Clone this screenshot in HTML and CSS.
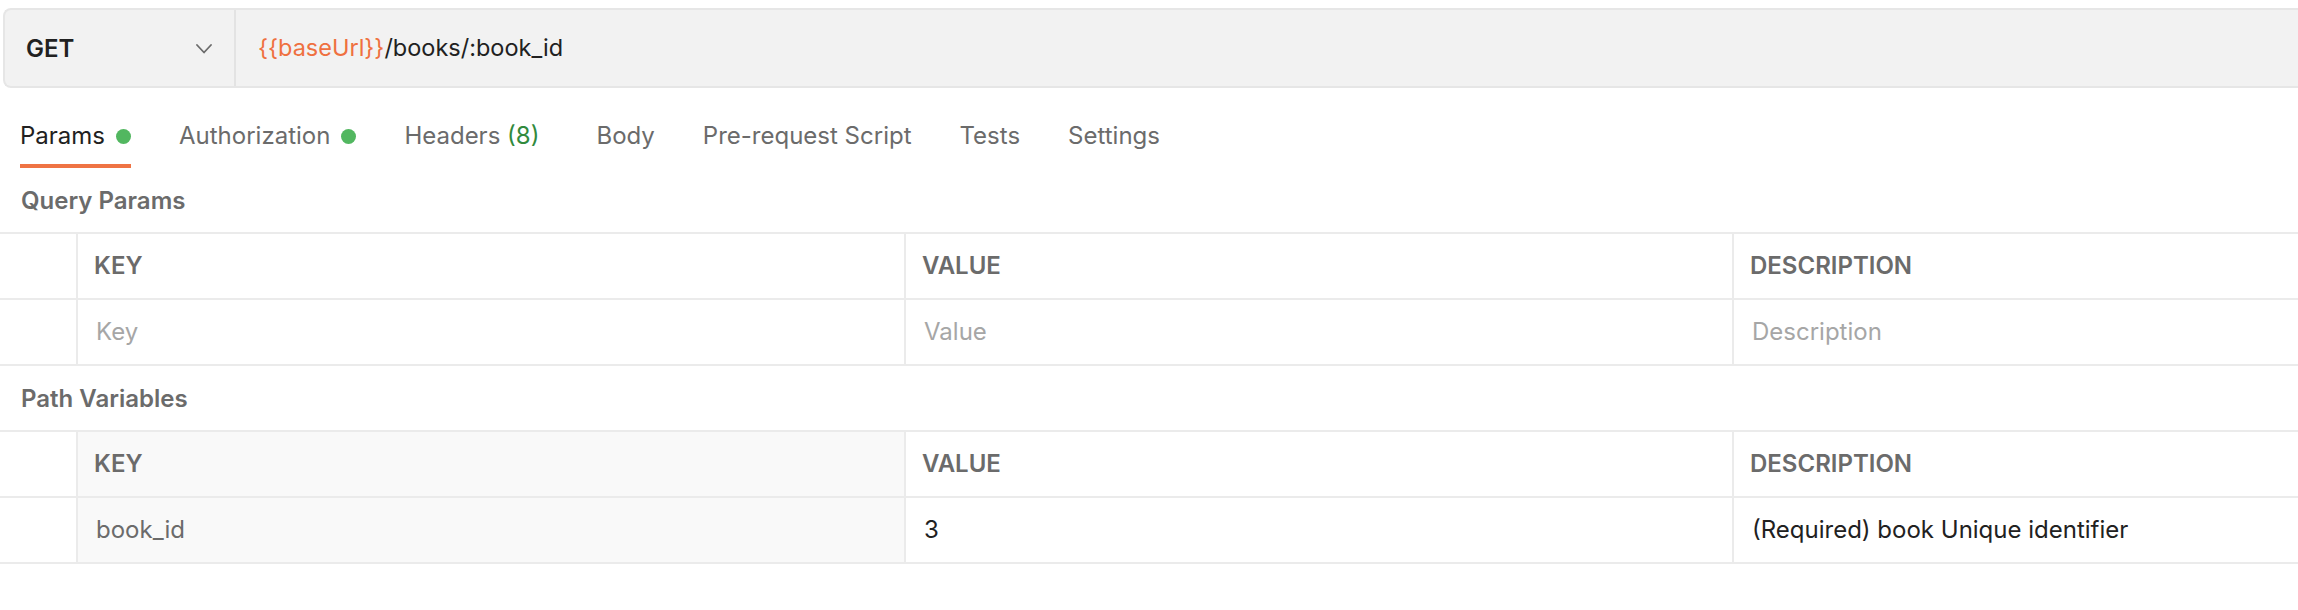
FILE: index.html
```html
<!DOCTYPE html>
<html lang="en">
<head>
<meta charset="utf-8">
<title>Request</title>
<link rel="stylesheet" href="styles.css">
</head>
<body>
<div class="page">
  <div class="url-bar">
    <div class="method">
      <span class="method-name">GET</span>
      <svg class="chevron" width="16" height="10" viewBox="0 0 16 10"><path d="M1 1 L8 8.5 L15 1" fill="none" stroke="#6b6b6b" stroke-width="1.8" stroke-linecap="round" stroke-linejoin="round"/></svg>
    </div>
    <div class="url"><span class="var">{{baseUrl}}</span>/books/:book_id</div>
  </div>

  <nav class="tabs">
    <div class="tab active">Params<span class="dot"></span></div>
    <div class="tab">Authorization<span class="dot"></span></div>
    <div class="tab tab-headers">Headers <span class="count">(8)</span></div>
    <div class="tab">Body</div>
    <div class="tab">Pre-request Script</div>
    <div class="tab">Tests</div>
    <div class="tab">Settings</div>
  </nav>

  <div class="section-title">Query Params</div>
  <div class="table">
    <div class="row head">
      <div class="cell handle"></div>
      <div class="cell">KEY</div>
      <div class="cell">VALUE</div>
      <div class="cell">DESCRIPTION</div>
    </div>
    <div class="row">
      <div class="cell handle"></div>
      <div class="cell input placeholder">Key</div>
      <div class="cell input placeholder">Value</div>
      <div class="cell input placeholder">Description</div>
    </div>
  </div>

  <div class="section-title">Path Variables</div>
  <div class="table">
    <div class="row head">
      <div class="cell handle"></div>
      <div class="cell shaded">KEY</div>
      <div class="cell">VALUE</div>
      <div class="cell">DESCRIPTION</div>
    </div>
    <div class="row">
      <div class="cell handle"></div>
      <div class="cell input shaded muted">book_id</div>
      <div class="cell input">3</div>
      <div class="cell input">(Required) book Unique identifier</div>
    </div>
  </div>
</div>
</body>
</html>
```
FILE: styles.css
```css
html, body {
  margin: 0;
  padding: 0;
  background: #ffffff;
}

body {
  font-family: Inter, "Noto Sans", "Liberation Sans", sans-serif;
  font-size: 24px;
  color: #212121;
  overflow: hidden;
}

.page {
  padding-top: 8px;
}

/* URL bar */
.url-bar {
  display: flex;
  height: 80px;
  box-sizing: border-box;
  margin-left: 3px;
  border: 2px solid #e6e6e6;
  border-right: 0;
  border-radius: 8px 0 0 8px;
  background: #f2f2f2;
}

.method {
  width: 231px;
  box-sizing: border-box;
  flex: none;
  display: flex;
  align-items: center;
  justify-content: space-between;
  padding: 0 22px 0 21px;
  border-right: 2px solid #e3e3e3;
}

.method-name {
  font-weight: 600;
  color: #212121;
  line-height: 32px;
  padding-top: 2px;
}

.chevron {
  display: block;
  margin-top: 1px;
}

.url {
  display: flex;
  align-items: center;
  padding-left: 22px;
  font-size: 23.5px;
  line-height: 32px;
  color: #212121;
}

.var {
  color: #ef7040;
}

/* Tabs */
.tabs {
  display: flex;
  gap: 48px;
  margin-top: 32px;
  padding-left: 20px;
}

.tab {
  display: flex;
  align-items: center;
  line-height: 32px;
  padding-bottom: 12px;
  border-bottom: 4px solid transparent;
  color: #6b6b6b;
}

.tab.active {
  color: #212121;
  border-bottom-color: #ef7344;
}

.tab-headers {
  margin-right: 9px;
  white-space: pre;
}

.dot {
  width: 15px;
  height: 15px;
  border-radius: 50%;
  background: #52b760;
  margin-left: 11px;
}

.count {
  color: #318a3d;
}

/* Section titles */
.section-title {
  padding: 17px 0 15px 21px;
  line-height: 32px;
  font-weight: 600;
  color: #6b6b6b;
}

/* Tables */
.table {
  border-top: 2px solid #ebebeb;
}

.row {
  display: grid;
  grid-template-columns: 76px 828px 828px 1fr;
  height: 66px;
  box-sizing: border-box;
  border-bottom: 2px solid #ebebeb;
}

.cell {
  display: flex;
  align-items: center;
  padding-left: 16px;
  border-left: 2px solid #ebebeb;
  line-height: 32px;
  white-space: nowrap;
  overflow: hidden;
}

.cell.handle {
  border-left: 0;
  padding-left: 0;
}

.head .cell {
  font-weight: 600;
  color: #6b6b6b;
}

.cell.input {
  padding-left: 18px;
  padding-bottom: 1px;
  color: #212121;
}

.cell.placeholder {
  color: #a6a6a6;
}

.cell.muted {
  color: #6b6b6b;
}

.cell.shaded {
  background: #f9f9f9;
}
```
